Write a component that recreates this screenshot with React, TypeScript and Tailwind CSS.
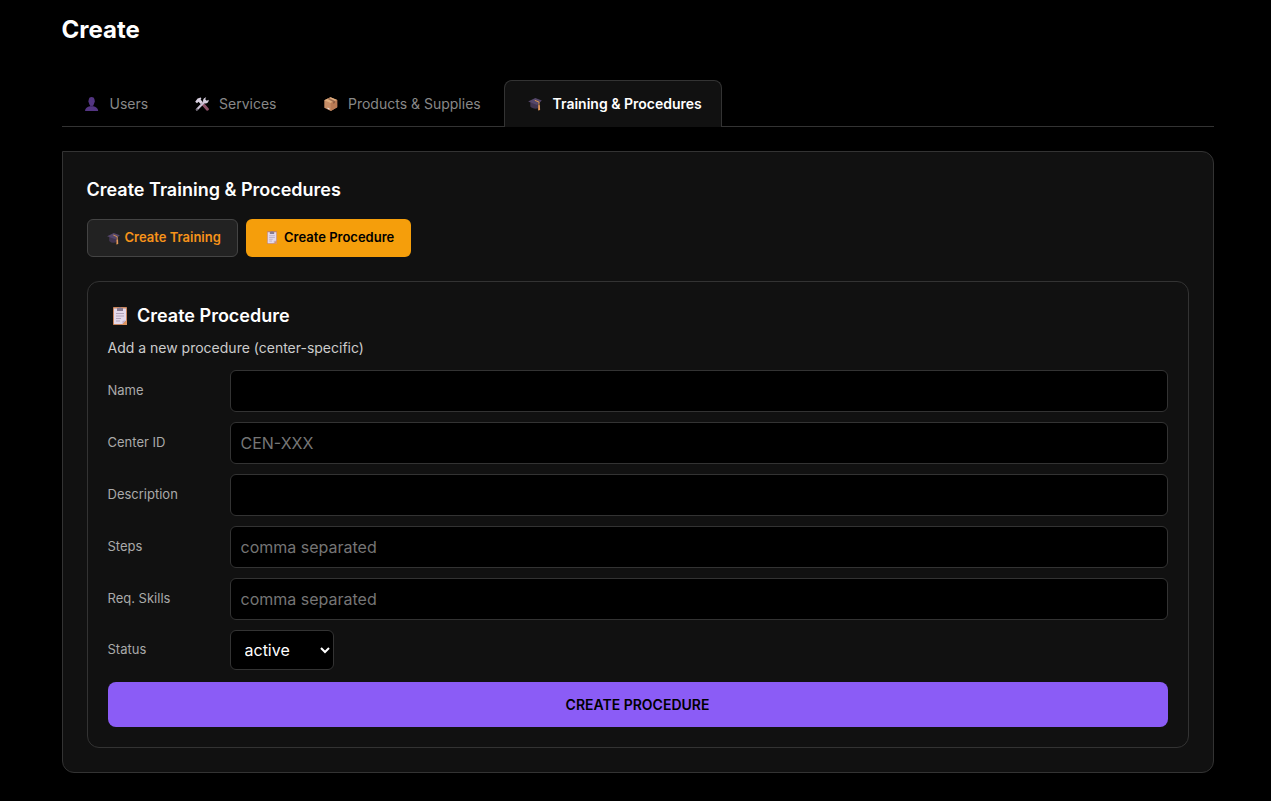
import React from "react";

type IconProps = { className?: string };

const UserIcon = ({ className }: IconProps) => (
  <svg viewBox="0 0 14 14" className={className}>
    <path d="M3.8 2.6C4 .8 5.1 0 6.6 0s2.7.8 2.9 2.6l.3 1.6c.2.6 0 1.1-.5 1.5-.1 1-.5 1.9-1.1 2.5v1.1c2.6.4 4.8 1.7 5 4.7H0c.2-3 2.3-4.3 5-4.700V8.200c-.6-.6-1-1.500-1.100-2.500-.5-.4-.700-.9-.500-1.500z" fill="#533582" />
    <path d="M5 8.200c1 .8 2.200.8 3.200 0v1.100c-1 .7-2.200.7-3.200 0z" fill="#3c2565" />
  </svg>
);

const ToolsIcon = ({ className }: IconProps) => (
  <svg viewBox="0 0 14 14" className={className}>
    <path d="M7.200 6.200 12.400 12.200" stroke="#8d5068" strokeWidth="2.900" strokeLinecap="round" />
    <path d="M1.900 12.500 9.800 4.400" stroke="#c9bfd3" strokeWidth="2.200" strokeLinecap="round" />
    <path d="M8.300 5.400C7.500 3 8.600.8 11.200.3L10.200 2.300l1.500 1.400L13.700 2.700c.2 2.500-1.700 4.100-4.300 3.600z" fill="#d6cddd" />
    <path d="M.2 4.800 2.600 1.500 5.600.5l.8.8-.8 1.100 2.100 2.500-2 2L3.500 4.700 2 6.300z" fill="#d9d0e0" />
    <circle cx="2" cy="12.300" r=".7" fill="#25202b" />
  </svg>
);

const BoxIcon = ({ className }: IconProps) => (
  <svg viewBox="0 0 14 14" className={className}>
    <path d="M6.500.2 13.200 3v7.300L6.800 14 .3 10.700V3.200z" fill="#c68d66" />
    <path d="M6.500.2 13.200 3 6.600 6 .3 3.200z" fill="#e0ad7e" />
    <path d="M6.600 6 13.200 3v7.300L6.800 14z" fill="#b97b55" />
    <path d="m3.300 1.700 1.800-.8L11 3.900v2l-1.900.8V4.900z" fill="#82543f" opacity=".75" />
    <path d="m3.500 10.500 2 1v1.300l-2-1z" fill="#eee0db" />
  </svg>
);

const CapIcon = ({ className }: IconProps) => (
  <svg viewBox="0 0 14 14" className={className}>
    <path d="M2.300 5.300v4.300c2.200 2.300 5.800 2.600 8.600 1.300V5z" fill="#40344f" />
    <path d="M.1 4.500 7.300 1.100l6.500 2.500-4.700 4.300z" fill="#54466a" />
    <path d="M6.800 3.300 11 5.100v4.300" stroke="#d99751" strokeWidth="1" fill="none" />
    <path d="m10.300 8.300 1.600-.1.200 4.800-2 .4z" fill="#e29758" />
  </svg>
);

const ClipboardIcon = ({ className }: IconProps) => (
  <svg viewBox="0 0 14 18" className={className}>
    <rect width="14" height="18" rx=".7" fill="#c9865e" />
    <path d="M1 1.500h12v11.700L9.500 17H1z" fill="#e4d9ea" />
    <path d="M14 12.800V18H8.800z" fill="#de9560" />
    <path d="M13 13.200 9.500 17v-3.100z" fill="#c0afca" />
    <path d="M4 1h1.600C6 0 8 0 8.400 1H10v3H4z" fill="#887b91" />
    <path d="M3 6.500h8M3 9h8M3 11.500h5M3 14h4" stroke="#a497af" strokeWidth=".8" />
  </svg>
);

const tabs = [
  { label: "Users", Icon: UserIcon, box: "w-[109.500px] gap-[10.500px]" },
  { label: "Services", Icon: ToolsIcon, box: "w-[129px] gap-[10.500px]" },
  { label: "Products & Supplies", Icon: BoxIcon, box: "w-[204px] gap-[10.500px]" },
];

const fields = [
  { label: "Name", placeholder: "" },
  { label: "Center ID", placeholder: "CEN-XXX" },
  { label: "Description", placeholder: "" },
  { label: "Steps", placeholder: "comma separated" },
  { label: "Req. Skills", placeholder: "comma separated" },
];

export default function App() {
  return (
    <div className="h-[801px] overflow-hidden bg-black pl-[61.5px] font-['Inter',sans-serif] text-white">
      <div className="w-[1152px]">
        <h1 className="pt-3 text-2xl leading-9 font-bold">Create</h1>

        <nav className="mt-8 flex h-[47px] border-b border-[#333] text-sm text-[#888]">
          {tabs.map(({ label, Icon, box }) => (
            <button key={label} className={`${box} flex h-12 shrink-0 items-center pl-[23.5px] whitespace-nowrap`}>
              <Icon className="h-3.5 w-3.5 shrink-0" />
              {label}
            </button>
          ))}
          <button className="flex h-[47px] w-[218px] items-center gap-[11px] rounded-t-lg border border-b-0 border-[#333] bg-[#111] pl-[22.5px] font-semibold whitespace-nowrap text-white">
            <CapIcon className="h-3.5 w-3.5 shrink-0" />
            Training &amp; Procedures
          </button>
        </nav>

        <main className="mt-6 h-[622px] rounded-xl rounded-tl-none border border-[#333] bg-[#111] px-6 pt-6">
          <h2 className="text-lg leading-7 font-semibold">Create Training &amp; Procedures</h2>
          <div className="mt-[15px] flex gap-2 text-[13px] font-semibold">
            <button className="flex h-[38px] w-[151px] items-center gap-[5px] rounded-md border border-[#444] bg-[#222] pl-[19px] whitespace-nowrap text-[#f7931a]">
              <CapIcon className="mt-px h-[13px] w-[13px] shrink-0" />
              Create Training
            </button>
            <button className="flex h-[38px] w-[165px] items-center gap-[7.5px] rounded-md bg-[#f59e0b] pl-[21px] whitespace-nowrap text-black">
              <ClipboardIcon className="mb-px h-[13px] w-2.5 shrink-0" />
              Create Procedure
            </button>
          </div>

          <section className="mt-6 h-[467px] rounded-xl border border-[#333] px-5 pt-5">
            <h3 className="flex items-center gap-2.5 pl-[5.5px] text-lg leading-7 font-semibold">
              <ClipboardIcon className="h-[18px] w-3.5" />
              Create Procedure
            </h3>
            <p className="mt-[7px] text-sm leading-[21px] text-[#ccc]">Add a new procedure (center-specific)</p>
            <form className="mt-3">
              {fields.map(({ label, placeholder }) => (
                <label key={label} className="mb-2.5 flex h-[42px] items-center">
                  <span className="w-[122px] shrink-0 text-[13px] text-[#aaa]">{label}</span>
                  <input
                    placeholder={placeholder}
                    className="h-[42px] w-[938px] rounded-md border border-[#333] bg-black px-2.5 text-base placeholder:text-[#757575]"
                  />
                </label>
              ))}
              <label className="flex h-10 items-center">
                <span className="w-[122px] shrink-0 text-[13px] text-[#aaa]">Status</span>
                <select className="h-10 w-[104px] rounded-md border border-[#333] bg-black pr-[9px] pl-2.5 text-base text-white">
                  <option>active</option>
                </select>
              </label>
              <button type="button" className="mt-3 h-[45px] w-full rounded-lg bg-[#8b5cf6] text-sm font-semibold text-black">
                CREATE PROCEDURE
              </button>
            </form>
          </section>
        </main>
      </div>
    </div>
  );
}
